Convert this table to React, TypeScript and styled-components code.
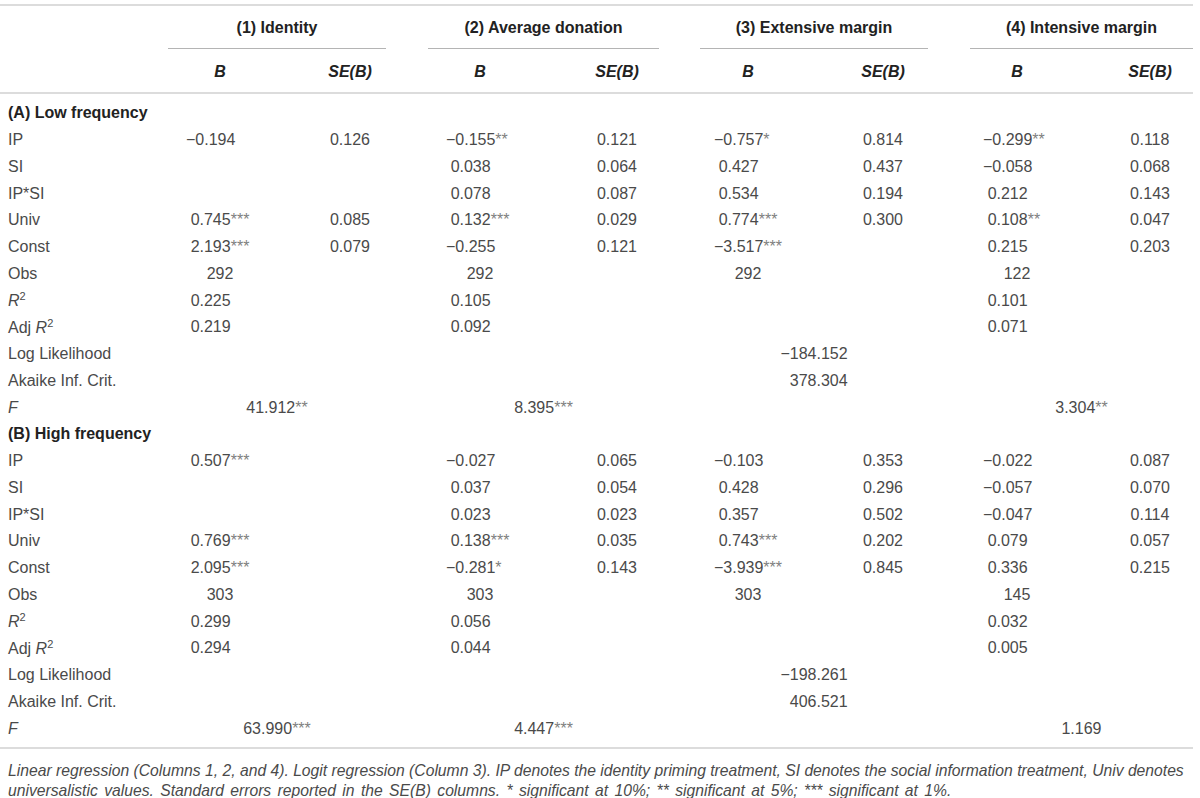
import React from "react";
import styled, { createGlobalStyle } from "styled-components";

const Global = createGlobalStyle`
  html, body { margin: 0; padding: 0; background: #fff; }
  body { font-family: "Liberation Sans", Arial, sans-serif; color: #4a4a4a; }
`;

const COLS = "158px 124px 136px 124px 150px 112px 158px 110px 121px";

const Table = styled.div`
  width: 1193px;
  margin-top: 4px;
  border-top: 2px solid #dcdcdc;
`;

const HeadRow = styled.div<{ $h: number; $line?: boolean }>`
  display: grid;
  grid-template-columns: ${COLS};
  height: ${(p) => p.$h}px;
  align-items: center;
  border-bottom: ${(p) => (p.$line ? "2px solid #dcdcdc" : "none")};
  box-sizing: border-box;
`;

const GroupHead = styled.div<{ $ml: number; $mr: number }>`
  grid-column: span 2;
  align-self: stretch;
  display: flex;
  align-items: center;
  justify-content: center;
  margin-left: ${(p) => p.$ml}px;
  margin-right: ${(p) => p.$mr}px;
  border-bottom: 1.5px solid #b4b4b4;
  font-weight: 700;
  font-size: 16px;
  color: #222;
  padding-top: 2px;
`;

const SubHead = styled.div<{ $pl?: number }>`
  text-align: center;
  padding-left: ${(p) => p.$pl ?? 0}px;
  font-weight: 700;
  font-style: italic;
  font-size: 16px;
  color: #222;
  padding-top: 3px;
`;

const Body = styled.div`
  padding: 6px 0 5px;
  border-bottom: 2px solid #dcdcdc;
`;

const Row = styled.div`
  display: grid;
  grid-template-columns: ${COLS};
  height: 26.75px;
  align-items: center;
  font-size: 16px;
  white-space: nowrap;
`;

const Section = styled.div`
  grid-column: 1 / -1;
  padding-left: 8px;
  font-weight: 700;
  color: #222;
`;

const Label = styled.div`
  padding-left: 8px;
`;

const Cell = styled.div<{ $pl?: number; $span?: number; $ml?: number; $mr?: number }>`
  text-align: center;
  grid-column: span ${(p) => p.$span ?? 1};
  padding-left: ${(p) => p.$pl ?? 0}px;
  margin-left: ${(p) => p.$ml ?? 0}px;
  margin-right: ${(p) => p.$mr ?? 0}px;
`;

const Stars = styled.span<{ $hidden?: boolean }>`
  color: #808080;
  visibility: ${(p) => (p.$hidden ? "hidden" : "visible")};
`;

const Ghost = styled.span`
  visibility: hidden;
`;

const Note = styled.p`
  margin: 12px 0 0;
  padding-left: 8px;
  font-style: italic;
  font-size: 15.7px;
  line-height: 20px;
  color: #4a4a4a;
  white-space: nowrap;
`;

const NoteLast = styled.span`
  word-spacing: 2px;
`;

const Sup = styled.sup`
  font-size: 11px;
`;

const Italic = styled.i``;

const GROUPS = [
  { ml: 10, mr: 32 },
  { ml: 10, mr: 33 },
  { ml: 8, mr: 34 },
  { ml: 8, mr: 0 },
];

const Num: React.FC<{ v: string; pad?: boolean }> = ({ v, pad }) => {
  if (!v) return null;
  const m = v.match(/^(.*?)(\**)$/);
  const base = m ? m[1] : v;
  const stars = m ? m[2] : "";
  const isInt = /^\d+$/.test(base);
  const fill = pad && !isInt ? "***".slice(stars.length) : "";
  return (
    <>
      {base}
      {stars && <Stars>{stars}</Stars>}
      {fill && <Stars $hidden>{fill}</Stars>}
    </>
  );
};

type DataRow = { label: React.ReactNode; vals: string[] };

const R2 = (
  <>
    <Italic>R</Italic>
    <Sup>2</Sup>
  </>
);

const rowsA: DataRow[] = [
  { label: "IP", vals: ["−0.194", "0.126", "−0.155**", "0.121", "−0.757*", "0.814", "−0.299**", "0.118"] },
  { label: "SI", vals: ["", "", "0.038", "0.064", "0.427", "0.437", "−0.058", "0.068"] },
  { label: "IP*SI", vals: ["", "", "0.078", "0.087", "0.534", "0.194", "0.212", "0.143"] },
  { label: "Univ", vals: ["0.745***", "0.085", "0.132***", "0.029", "0.774***", "0.300", "0.108**", "0.047"] },
  { label: "Const", vals: ["2.193***", "0.079", "−0.255", "0.121", "−3.517***", "", "0.215", "0.203"] },
  { label: "Obs", vals: ["292", "", "292", "", "292", "", "122", ""] },
  { label: R2, vals: ["0.225", "", "0.105", "", "", "", "0.101", ""] },
  { label: <>Adj {R2}</>, vals: ["0.219", "", "0.092", "", "", "", "0.071", ""] },
];

const rowsB: DataRow[] = [
  { label: "IP", vals: ["0.507***", "", "−0.027", "0.065", "−0.103", "0.353", "−0.022", "0.087"] },
  { label: "SI", vals: ["", "", "0.037", "0.054", "0.428", "0.296", "−0.057", "0.070"] },
  { label: "IP*SI", vals: ["", "", "0.023", "0.023", "0.357", "0.502", "−0.047", "0.114"] },
  { label: "Univ", vals: ["0.769***", "", "0.138***", "0.035", "0.743***", "0.202", "0.079", "0.057"] },
  { label: "Const", vals: ["2.095***", "", "−0.281*", "0.143", "−3.939***", "0.845", "0.336", "0.215"] },
  { label: "Obs", vals: ["303", "", "303", "", "303", "", "145", ""] },
  { label: R2, vals: ["0.299", "", "0.056", "", "", "", "0.032", ""] },
  { label: <>Adj {R2}</>, vals: ["0.294", "", "0.044", "", "", "", "0.005", ""] },
];

type Block = {
  title: string;
  rows: DataRow[];
  ll: string;
  aic: string;
  f: string[];
};

const blocks: Block[] = [
  { title: "(A) Low frequency", rows: rowsA, ll: "−184.152", aic: "378.304", f: ["41.912**", "8.395***", "", "3.304**"] },
  { title: "(B) High frequency", rows: rowsB, ll: "−198.261", aic: "406.521", f: ["63.990***", "4.447***", "", "1.169"] },
];

const DataLine: React.FC<{ row: DataRow }> = ({ row }) => (
  <Row>
    <Label>{row.label}</Label>
    {row.vals.map((v, i) => (
      <Cell key={i} $pl={i === 7 ? 35 : 0}>
        <Num v={v} pad={i % 2 === 0} />
      </Cell>
    ))}
  </Row>
);

const MergedLine: React.FC<{ label: React.ReactNode; vals: string[]; ghostMinus?: boolean }> = ({ label, vals, ghostMinus }) => (
  <Row>
    <Label>{label}</Label>
    {vals.map((v, i) => (
      <Cell key={i} $span={2} $ml={GROUPS[i].ml} $mr={GROUPS[i].mr}>
        {ghostMinus && v && !v.startsWith("−") && <Ghost>−</Ghost>}
        <Num v={v} />
      </Cell>
    ))}
  </Row>
);

export default function App() {
  const heads = ["(1) Identity", "(2) Average donation", "(3) Extensive margin", "(4) Intensive margin"];
  return (
    <>
      <Global />
      <Table>
        <HeadRow $h={43}>
          <div />
          {heads.map((h, i) => (
            <GroupHead key={h} $ml={GROUPS[i].ml} $mr={GROUPS[i].mr}>
              {h}
            </GroupHead>
          ))}
        </HeadRow>
        <HeadRow $h={45} $line>
          <div />
          {[0, 1, 2, 3, 4, 5, 6, 7].map((i) => (
            <SubHead key={i} $pl={i === 7 ? 35 : 0}>
              {i % 2 === 0 ? "B" : "SE(B)"}
            </SubHead>
          ))}
        </HeadRow>
        <Body>
          {blocks.map((b) => (
            <React.Fragment key={b.title}>
              <Row>
                <Section>{b.title}</Section>
              </Row>
              {b.rows.map((r, i) => (
                <DataLine key={i} row={r} />
              ))}
              <MergedLine label="Log Likelihood" vals={["", "", b.ll, ""]} ghostMinus />
              <MergedLine label="Akaike Inf. Crit." vals={["", "", b.aic, ""]} ghostMinus />
              <MergedLine label={<Italic>F</Italic>} vals={b.f} />
            </React.Fragment>
          ))}
        </Body>
      </Table>
      <Note>
        Linear regression (Columns 1, 2, and 4). Logit regression (Column 3). IP denotes the identity priming treatment, SI denotes the social information treatment, Univ denotes
        <br />
        <NoteLast>
          universalistic values. Standard errors reported in the SE(B) columns. * significant at 10%; ** significant at 5%; *** significant at 1%.
        </NoteLast>
      </Note>
    </>
  );
}
